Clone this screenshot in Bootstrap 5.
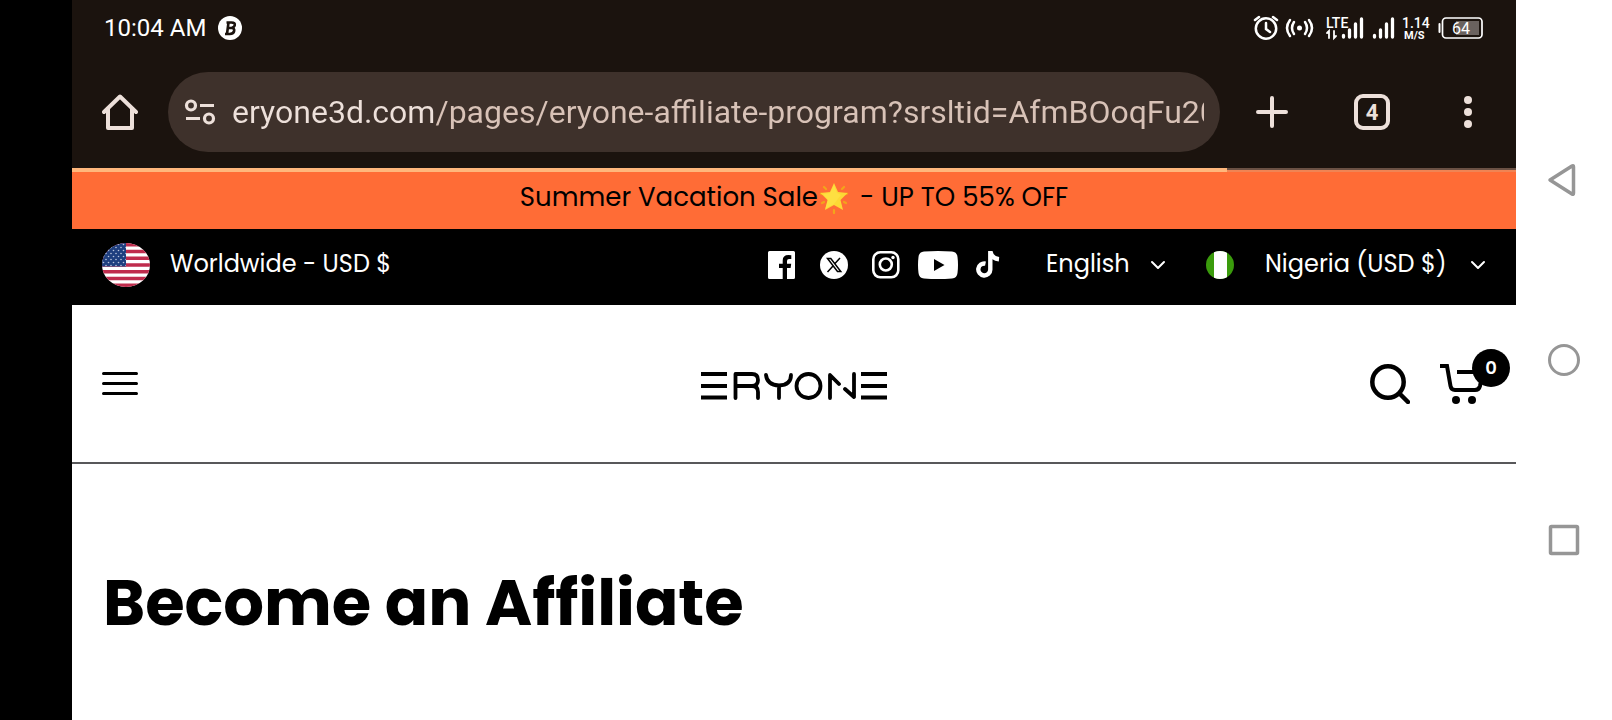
<!DOCTYPE html>
<html lang="en">
<head>
<meta charset="utf-8">
<meta name="viewport" content="width=device-width, initial-scale=1">
<title>Become an Affiliate</title>
<link href="https://cdn.jsdelivr.net/npm/bootstrap@5.3.0/dist/css/bootstrap.min.css" rel="stylesheet">
<style>
  body { font-family: Poppins, Inter, sans-serif; background: #fff; color: #000; }
  svg { display: block; flex: none; }
  .device { min-height: 100vh; }
  .cutout { width: 72px; background: #000; }
  .softkeys { width: 96px; padding-top: 160px; gap: 140px; }
  .browser { background: #1b130e; font-family: Roboto, sans-serif; }
  .status { height: 56px; padding: 0 32px; gap: 12px; color: #fff; font-size: 24px; }
  .toolbar { height: 112px; padding: 0 36px 0 30px; color: #ede0da; }
  .pill { height: 80px; background: #3e312b; padding: 0 16px; margin: 0 36px 0 30px; }
  .tools { gap: 66px; }
  .address { min-width: 0; height: 48px; padding: 0; font-size: 32px; color: #ede0da;
    background: linear-gradient(90deg, #ede0da 202px, #d8c2b7 202px);
    -webkit-background-clip: text; background-clip: text; -webkit-text-fill-color: transparent; }
  .load { height: 4px; border-radius: 0; background: linear-gradient(#6b5144 50%, #f08454 50%); }
  .load .progress-bar { background: #ffb77c; }
  .promo { height: 57px; background: #ff6c36; font-size: 26px; padding-bottom: 6px; }
  .star { margin-right: 10px; }
  .topbar { height: 76px; background: #000; color: #fff; padding: 0 30px 4px; font-size: 24px; }
  .region { margin-left: 20px; padding-bottom: 2px; }
  .picker { height: 40px; border: 0; color: #fff; padding: 0 0 2px; font-size: 24px; line-height: 36px; appearance: none;
    background: transparent url("data:image/svg+xml,%3Csvg xmlns='http://www.w3.org/2000/svg' viewBox='0 0 16 10'%3E%3Cpath d='M2 2l6 6 6-6' fill='none' stroke='white' stroke-width='2' stroke-linecap='round' stroke-linejoin='round'/%3E%3C/svg%3E") no-repeat right center / 16px 10px; }
  .pick-lang { width: 120px; margin: 0 40px 0 42px; }
  .pick-land { width: 221px; margin-left: 31px; }
  .masthead { height: 159px; padding: 0 30px; border-bottom: 2px solid #58585a; }
  .brand { padding-top: 4px; }
  .side { flex: 1 1 0; }
  .icons { gap: 30px; }
  .count { width: 38px; height: 38px; left: 32px; top: -14px; background: #000; color: #fff; font-size: 18px; font-weight: 600; }
  h1 { font-size: 64px; font-weight: 700; line-height: 80px; margin: 0; padding: 99px 31px 0; }
</style>
</head>
<body>
<div class="device d-flex">
  <div class="cutout"></div>
  <div class="flex-grow-1 overflow-hidden">
    <div class="browser">
      <div class="status d-flex align-items-center">
        <span>10:04 AM</span>
        <svg width="24" height="24" viewBox="0 0 24 24"><circle cx="12" cy="12" r="12" fill="#fff"/><path d="M8.500 6.500h5q4 0 3.200 3-.7 2-3 2.300 2.800.4 2.500 3-.5 3.200-4.500 3.200H7M10.500 6.500L9 18M10 12h4" fill="none" stroke="#1b130e" stroke-width="2.600"/></svg>
        <svg class="ms-auto" width="232" height="26" viewBox="1252 15 232 26" fill="none" stroke="#fff" stroke-width="2.500" stroke-linecap="round">
          <circle cx="1266" cy="28.500" r="10.200"/><path d="M1266 23v6l4 3M1255 20l4-3M1277 20l-4-3"/>
          <circle cx="1299.500" cy="28" r="2.500" fill="#fff" stroke="none"/><path d="M1294 22q-4 6 0 12M1305 22q4 6 0 12M1290 20q-6 8 0 16M1309 20q6 8 0 16"/>
          <path d="M1329 38v-7l-2 2M1334 31v7l2-2" stroke-width="1.800"/>
          <path d="M1343.500 35.500v1.500M1349.500 30v7M1355.500 24v13M1361.500 19v18M1374.500 35.500v1.500M1380.500 30v7M1386.500 24v13M1392.500 19v18" stroke-width="3.300"/>
          <g fill="#fff" stroke="none" font-family="Roboto, sans-serif"><text x="1326" y="28" font-size="14" font-weight="500">LTE</text><text x="1402" y="28" font-size="14" font-weight="500">1.14</text><text x="1404" y="39" font-size="11" font-weight="700">M/S</text></g>
          <rect x="1442.500" y="18" width="39.500" height="20" rx="3.500" stroke-width="1.700"/><rect x="1456" y="21" width="23" height="14" fill="#6a625f" stroke="none"/><path d="M1439.500 24v8" stroke-width="2"/>
          <text x="1452" y="34" font-size="16" font-family="Roboto, sans-serif" fill="#fff" stroke="none">64</text>
        </svg>
      </div>
      <div class="toolbar d-flex align-items-center">
        <button class="btn p-0 border-0" aria-label="Home"><svg width="36" height="36" viewBox="0 0 36 36" fill="none" stroke="#ede0da" stroke-width="4" stroke-linecap="round" stroke-linejoin="round"><path d="M2 18L18 2.500 34 18M6 15v19h24V15"/></svg></button>
        <div class="pill rounded-pill d-flex align-items-center flex-grow-1">
          <svg width="32" height="28" viewBox="0 0 32 28" fill="none" stroke="#ede0da" stroke-width="3.200"><circle cx="7" cy="7.500" r="4.500"/><circle cx="25" cy="20.500" r="4.500"/><path d="M16 7.500h14M2 20.500h14"/></svg>
          <input class="address form-control border-0 shadow-none rounded-0 ms-3" type="text" aria-label="Address" value="eryone3d.com/pages/eryone-affiliate-program?srsltid=AfmBOoqFu20">
        </div>
        <div class="tools d-flex">
          <button class="btn p-0 border-0" aria-label="New tab"><svg width="32" height="32" viewBox="0 0 32 32" stroke="#ede0da" stroke-width="4" stroke-linecap="round"><path d="M16 2v28M2 16h28"/></svg></button>
          <button class="btn p-0 border-0" aria-label="Tabs"><svg width="36" height="36" viewBox="0 0 36 36"><rect x="2" y="2" width="32" height="32" rx="7" fill="none" stroke="#ede0da" stroke-width="4"/><text x="18" y="26" text-anchor="middle" font-family="Roboto, sans-serif" font-size="22" font-weight="700" fill="#ede0da">4</text></svg></button>
          <button class="btn p-0 border-0" aria-label="Menu"><svg width="24" height="32" viewBox="0 0 24 32" fill="#ede0da"><circle cx="12" cy="4" r="4"/><circle cx="12" cy="16" r="4"/><circle cx="12" cy="28" r="4"/></svg></button>
        </div>
      </div>
      <div class="load progress"><div class="progress-bar" style="width:80%"></div></div>
    </div>

    <div class="promo d-flex align-items-center justify-content-center">
      <span>Summer Vacation Sale</span>
      <svg class="star" width="32" height="32" viewBox="0 0 30 32"><g stroke="#f2a51b" stroke-width="2.200" stroke-linecap="round"><path d="M15 28v3M3 12l-1-.4M27 12l1-.4M5 5l2 2M25 5l-2 2M3 21l2-1M27 21l-2-1"/></g><path d="M15 1l4 9 9.500 1-7 7 2.500 10-9-5-9 5 2.500-10-7-7L11 10z" fill="#fdd835"/><path d="M15 3l3 8 4 2-7 9-9 5 3-9-5-6 7-1z" fill="#ffe54d" opacity=".5"/></svg>
      <span>- UP TO 55% OFF</span>
    </div>

    <nav class="topbar d-flex align-items-center" aria-label="Store">
      <svg width="48" height="44" viewBox="0 0 48 44">
        <defs><clipPath id="oval"><ellipse cx="24" cy="22" rx="24" ry="22"/></clipPath><pattern id="stars" width="5" height="6" patternUnits="userSpaceOnUse"><circle cx="1.500" cy="1.500" r=".8" fill="#b9c3dc"/><circle cx="4" cy="4.500" r=".8" fill="#b9c3dc"/></pattern></defs>
        <g clip-path="url(#oval)"><path d="M0 0h48v44H0z" fill="#fff"/><path d="M0 1.700h48M0 8.500h48M0 15.200h48M0 22h48M0 28.800h48M0 35.500h48M0 42.300h48" stroke="#bf2c4d" stroke-width="3.400"/><path d="M0 0h24v23.500H0z" fill="#1f3f7f"/><path d="M0 0h24v23.500H0z" fill="url(#stars)"/></g>
      </svg>
      <span class="region">Worldwide - USD $</span>
      <div class="d-flex ms-auto gap-4">
        <a href="#" aria-label="Facebook"><svg width="28" height="28" viewBox="0 0 28 28"><path fill="#fff" d="M1.500 0h24Q27 0 27 1.500v25Q27 28 25.500 28H19V17h3.600l.6-4.200H19V10q0-2 2-2h2.300V4.200Q22 4 20.500 4 14.700 4 14.700 9.500v3.300H11V17h3.700v11H1.500Q0 28 0 26.500v-25Q0 0 1.500 0z"/></svg></a>
        <a href="#" aria-label="X"><svg width="28" height="28" viewBox="0 0 28 28"><circle cx="14" cy="14" r="14" fill="#fff"/><path d="M7.500 7.500h3.300l10 13h-3.300zM20 7l-5.500 6M13 15l-5.500 6" fill="none" stroke="#000" stroke-width="1.500"/></svg></a>
        <a href="#" aria-label="Instagram"><svg width="28" height="28" viewBox="0 0 28 28" fill="none" stroke="#fff" stroke-width="2.600"><rect x="1.300" y="1.300" width="25" height="25" rx="7"/><circle cx="13.800" cy="13.500" r="6"/><circle cx="21" cy="6.500" r="1.700" fill="#fff" stroke="none"/></svg></a>
        <a href="#" aria-label="YouTube"><svg width="28" height="28" viewBox="6 0 28 28" overflow="visible"><path d="M6 .5q14-1 28 0 5 .5 5.500 5.500 1 8 0 16-.5 5-5.500 5.500-14 1-28 0-5-.5-5.500-5.500-1-8 0-16Q1 1 6 .5z" fill="#fff"/><path d="M16 8l10.500 6L16 20z"/></svg></a>
        <a href="#" aria-label="TikTok"><svg width="28" height="28" viewBox="1 0 28 28" fill="none" stroke="#fff" stroke-width="4.400"><path d="M10.500 12.600a6 6 0 1 0 4.800 6V0M15.300 0q1 7.500 8.700 8.200"/></svg></a>
      </div>
      <select class="picker pick-lang" aria-label="Language"><option>English</option></select>
      <svg width="28" height="28" viewBox="0 0 28 28"><defs><clipPath id="disc"><circle cx="14" cy="14" r="14"/></clipPath></defs><g clip-path="url(#disc)"><path d="M0 0h28v28H0z" fill="#3a9b0c"/><path d="M8 0h13v28H8z" fill="#fff"/></g></svg>
      <select class="picker pick-land" aria-label="Country"><option>Nigeria (USD $)</option></select>
    </nav>

    <header class="masthead d-flex align-items-center">
      <div class="side"><button class="btn p-0 border-0" aria-label="Open menu"><svg width="36" height="24" viewBox="0 0 36 24" stroke="#000" stroke-width="3" stroke-linecap="round"><path d="M1.500 1.500h33M1.500 11.500h33M1.500 21.500h33"/></svg></button></div>
      <a class="brand" href="#" aria-label="Eryone"><svg width="186" height="28" viewBox="0 0 186 28" fill="none" stroke="#000" stroke-width="3.800" stroke-linejoin="round"><path d="M0 2h26M0 14h26M0 25.500h26M160 2h26M160 14h26M160 25.500h26"/><path d="M34.500 26V2H51q6 0 6 6t-6 6H35M57 26v-6q0-6-6-6M65 3q1 10 13 10.500Q90 13 90 3M78 13.500V26M129 26V3l9 9M144 17l9 8V2" stroke-linecap="round"/><circle cx="107.500" cy="14" r="12"/></svg></a>
      <div class="side icons d-flex justify-content-end">
        <button class="btn p-0 border-0" aria-label="Search"><svg width="40" height="40" viewBox="0 0 40 40" fill="none" stroke="#000" stroke-width="4.500" stroke-linecap="round"><circle cx="18" cy="18" r="15.700"/><path d="M29.500 29.500L38 38"/></svg></button>
        <a href="#" class="position-relative text-decoration-none" aria-label="Cart"><svg width="46" height="42" viewBox="0 0 46 42"><path d="M0 3h7l3.500 20q.7 4 4.500 4h20q4 0 5-4l3-14H17" fill="none" stroke="#000" stroke-width="4"/><circle cx="16" cy="37" r="4"/><circle cx="32" cy="37" r="4"/></svg><span class="count position-absolute rounded-circle d-flex align-items-center justify-content-center">0</span></a>
      </div>
    </header>

    <main><h1>Become an Affiliate</h1></main>
  </div>
  <div class="softkeys d-flex flex-column align-items-center">
    <button class="btn p-0 border-0" aria-label="Back"><svg width="40" height="40" viewBox="0 0 40 40" fill="none" stroke="#969696" stroke-width="3.500" stroke-linejoin="round"><path d="M6 20L28 6q1.500-1 1.500 1v26q0 2-1.500 1z"/></svg></button>
    <button class="btn p-0 border-0" aria-label="Home screen"><svg width="40" height="40" viewBox="0 0 40 40" fill="none" stroke="#969696" stroke-width="3"><circle cx="20" cy="20" r="14.500"/></svg></button>
    <button class="btn p-0 border-0" aria-label="Recent apps"><svg width="40" height="40" viewBox="0 0 40 40" fill="none" stroke="#969696" stroke-width="3.500" stroke-linejoin="round"><rect x="6.500" y="6.500" width="27" height="27" rx="1"/></svg></button>
  </div>
</div>
<script src="https://cdn.jsdelivr.net/npm/bootstrap@5.3.0/dist/js/bootstrap.bundle.min.js"></script>
</body>
</html>
